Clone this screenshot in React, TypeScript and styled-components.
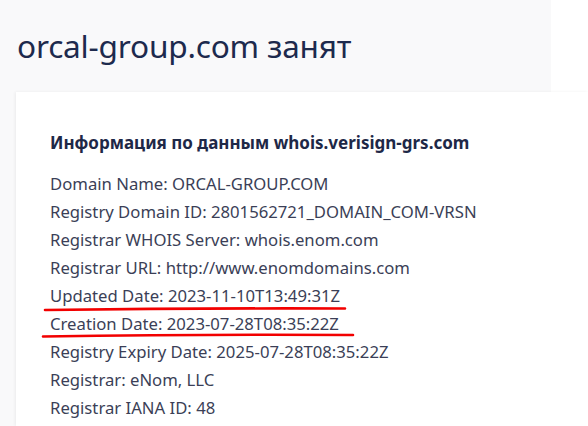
import React from "react";
import styled, { createGlobalStyle } from "styled-components";

const Global = createGlobalStyle`
  html, body { margin: 0; padding: 0; background: #ffffff; }
  body { font-family: "Noto Sans", "Open Sans", sans-serif; }
`;

const Page = styled.div`
  width: 588px;
  height: 426px;
  overflow: hidden;
  display: flex;
  flex-direction: column;
`;

const Header = styled.header`
  width: 551px;
  height: 92px;
  box-sizing: border-box;
  background: #f9f9fa;
  padding: 26px 0 0 17px;
`;

const Title = styled.h1`
  margin: 0;
  font-family: "Noto Sans", sans-serif;
  font-weight: 400;
  font-size: 31.6px;
  line-height: 40px;
  color: #1d2a4d;
  letter-spacing: -0.2px;
`;

const Body = styled.div`
  flex: 1;
  display: flex;
  background: linear-gradient(to right, #f9f9fa 551px, #ffffff 551px);
  padding-left: 16px;
`;

const Card = styled.section`
  position: relative;
  flex: 1;
  background: #ffffff;
  box-shadow: -1px 0 3px rgba(0, 0, 0, 0.06);
  padding: 39px 0 0 34px;
`;

const Heading = styled.h2`
  margin: 0 0 15px 0;
  font-size: 17px;
  font-weight: 700;
  line-height: 24px;
  color: #1e2847;
`;

const Lines = styled.div`
  display: flex;
  flex-direction: column;
`;

const Line = styled.div`
  font-size: 16.7px;
  line-height: 28px;
  color: #3b3f57;
  white-space: nowrap;
`;

const Mark = styled.svg`
  position: absolute;
  left: 0;
  top: 0;
  pointer-events: none;
`;

const lines = [
  "Domain Name: ORCAL-GROUP.COM",
  "Registry Domain ID: 2801562721_DOMAIN_COM-VRSN",
  "Registrar WHOIS Server: whois.enom.com",
  "Registrar URL: http://www.enomdomains.com",
  "Updated Date: 2023-11-10T13:49:31Z",
  "Creation Date: 2023-07-28T08:35:22Z",
  "Registry Expiry Date: 2025-07-28T08:35:22Z",
  "Registrar: eNom, LLC",
  "Registrar IANA ID: 48",
];

export default function App() {
  return (
    <>
      <Global />
      <Page>
        <Header>
          <Title>orcal-group.com занят</Title>
        </Header>
        <Body>
          <Card>
            <Heading>Информация по данным whois.verisign-grs.com</Heading>
            <Lines>
              {lines.map((l) => (
                <Line key={l}>{l}</Line>
              ))}
            </Lines>
            <Mark width="400" height="334" viewBox="0 0 400 334">
              <path
                d="M29 218 Q180 216 329 216.5"
                stroke="#f20000"
                strokeWidth="2.6"
                fill="none"
                strokeLinecap="round"
              />
              <path
                d="M27 244.5 Q190 242 337 243"
                stroke="#f20000"
                strokeWidth="2.6"
                fill="none"
                strokeLinecap="round"
              />
            </Mark>
          </Card>
        </Body>
      </Page>
    </>
  );
}
